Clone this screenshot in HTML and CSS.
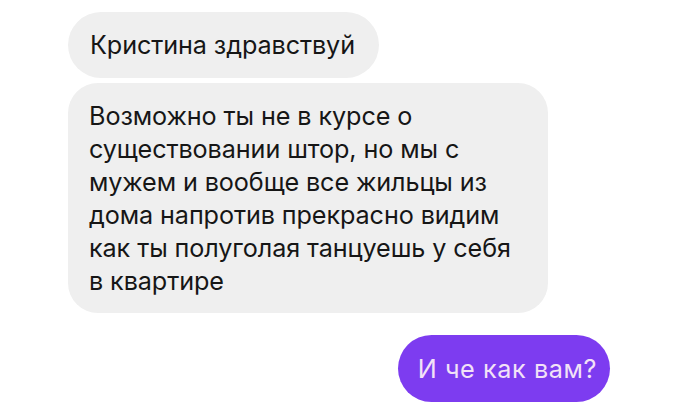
FILE: index.html
```html
<!DOCTYPE html>
<html lang="ru">
<head>
    <meta charset="UTF-8">
    <meta name="viewport" content="width=device-width, initial-scale=1.0">
    <title>Сообщения</title>
    <link rel="stylesheet" href="styles.css">
</head>
<body>
    <main class="chat">
        <div class="bubble incoming single">Кристина здравствуй</div>
        <div class="bubble incoming long">
            Возможно ты не в курсе о<br>
            существовании штор, но мы с<br>
            мужем и вообще все жильцы из<br>
            дома напротив прекрасно видим<br>
            как ты полуголая танцуешь у себя<br>
            в квартире
        </div>
        <div class="bubble outgoing">И че как вам?</div>
    </main>
</body>
</html>
```
FILE: styles.css
```css
/* Global Styles */
body {
    font-family: 'Inter', 'Liberation Sans', sans-serif;
    margin: 0;
    padding: 0;
    background-color: #fff;
    color: #161616;
}

.chat {
    display: flex;
    flex-direction: column;
    align-items: flex-start;
    padding: 12px 70px 0 68px;
}

.bubble {
    font-size: 25.2px;
    letter-spacing: -0.1px;
    white-space: nowrap;
}

.incoming {
    background-color: #efefef;
}

.single {
    padding: 17px 24px 17px 22px;
    line-height: 32px;
    border-radius: 33px;
}

.long {
    margin-top: 5px;
    width: 480px;
    box-sizing: border-box;
    padding: 17px 22px 15px 21px;
    line-height: 33px;
    border-radius: 30px;
}

.outgoing {
    align-self: flex-end;
    margin-top: 22px;
    padding: 18px 13px 17px 20px;
    line-height: 32px;
    letter-spacing: 0.6px;
    border-radius: 34px;
    background-color: #7d3cf0;
    color: #f2e2f7;
}
```
